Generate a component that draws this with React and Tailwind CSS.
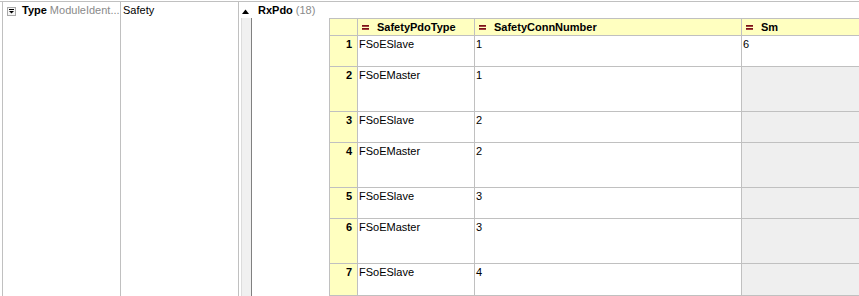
import React from "react";

const rows = [
  { n: 1, type: "FSoESlave", conn: "1", sm: "6", h: "h-[31px]" },
  { n: 2, type: "FSoEMaster", conn: "1", sm: null, h: "h-[45px]" },
  { n: 3, type: "FSoESlave", conn: "2", sm: null, h: "h-[31px]" },
  { n: 4, type: "FSoEMaster", conn: "2", sm: null, h: "h-[45px]" },
  { n: 5, type: "FSoESlave", conn: "3", sm: null, h: "h-[31px]" },
  { n: 6, type: "FSoEMaster", conn: "3", sm: null, h: "h-[45px]" },
  { n: 7, type: "FSoESlave", conn: "4", sm: null, h: "h-[32px]" },
];

function EqIcon() {
  return (
    <svg width="7" height="5" viewBox="0 0 7 5" className="shrink-0">
      <rect x="0" y="0" width="7" height="2" fill="#7b1414" />
      <rect x="0" y="3" width="7" height="2" fill="#7b1414" />
      <rect x="0" y="1" width="7" height="1" fill="#a04040" />
      <rect x="0" y="4" width="7" height="1" fill="#a04040" />
    </svg>
  );
}

function HeadCell({ w, label }) {
  return (
    <div className={`${w} shrink-0 flex items-center pl-[4px] border-r border-b border-[#c0c0c0]`}>
      <EqIcon />
      <span className="ml-[8px] font-bold whitespace-nowrap">{label}</span>
    </div>
  );
}

export default function App() {
  return (
    <div className="w-[859px] h-[296px] overflow-hidden bg-white pt-px text-[11px] leading-[13px] text-black font-['Liberation_Sans',Arial,sans-serif]">
      <div className="flex h-full border-t border-[#c0c0c0]">
        {/* Column 1 */}
        <div className="ml-[2px] w-[119px] shrink-0 border-l border-r border-[#c0c0c0] pt-[2px] pl-[4px]">
          <div className="flex items-start whitespace-nowrap">
            <svg width="9" height="9" viewBox="0 0 9 9" className="mt-[3px] shrink-0">
              <rect x="0.5" y="0.5" width="8" height="8" fill="#f6f6f6" stroke="#a8a8a8" />
              <rect x="2" y="2" width="5" height="1" fill="#000" />
              <path d="M2 4 L7 4 L4.5 6.5 Z" fill="#000" />
            </svg>
            <span className="ml-[6px] font-bold">Type</span>
            <span className="ml-[3px] text-[#8a8a8a]">ModuleIdent...</span>
          </div>
        </div>
        {/* Column 2 */}
        <div className="w-[118px] shrink-0 border-r border-[#c0c0c0] pt-[2px] pl-[2px]">Safety</div>
        {/* Column 3 */}
        <div className="flex-1 flex min-w-0">
          <div className="w-[13px] shrink-0 flex flex-col">
            <div className="h-[16px] pl-[3px] pt-[7px]">
              <svg width="7" height="5" viewBox="0 0 7 5">
                <path d="M0 5 L7 5 L3.5 0.5 Z" fill="#000" />
              </svg>
            </div>
            <div className="flex-1 ml-[2px] bg-[#f0f0f0] border-l border-[#dcdcdc] border-r border-r-[#808080]" />
          </div>
          <div className="flex-1 min-w-0 pt-[2px] pl-[6px]">
            <div className="whitespace-nowrap">
              <span className="font-bold">RxPdo</span>
              <span className="ml-[3px] text-[#8a8a8a]">(18)</span>
            </div>
            <div className="mt-px ml-[71px] border-l border-t border-[#c0c0c0] w-max">
              <div className="flex h-[17px] bg-[#ffffc0]">
                <div className="w-[28px] shrink-0 border-r border-b border-[#c0c0c0]" />
                <HeadCell w="w-[117px]" label="SafetyPdoType" />
                <HeadCell w="w-[267px]" label="SafetyConnNumber" />
                <HeadCell w="w-[140px]" label="Sm" />
              </div>
              {rows.map((r) => (
                <div key={r.n} className={`flex ${r.h}`}>
                  <div className="w-[28px] shrink-0 bg-[#ffffc0] border-r border-b border-[#c0c0c0] text-right pr-[5px] pt-[2px] font-bold">
                    {r.n}
                  </div>
                  <div className="w-[117px] shrink-0 border-r border-b border-[#c0c0c0] pl-px pt-[2px]">{r.type}</div>
                  <div className="w-[267px] shrink-0 border-r border-b border-[#c0c0c0] pl-px pt-[2px]">{r.conn}</div>
                  <div
                    className={`w-[140px] shrink-0 border-r border-b border-[#c0c0c0] pl-px pt-[2px] ${
                      r.sm ? "bg-white" : "bg-[#efefef]"
                    }`}
                  >
                    {r.sm}
                  </div>
                </div>
              ))}
            </div>
          </div>
        </div>
      </div>
    </div>
  );
}
